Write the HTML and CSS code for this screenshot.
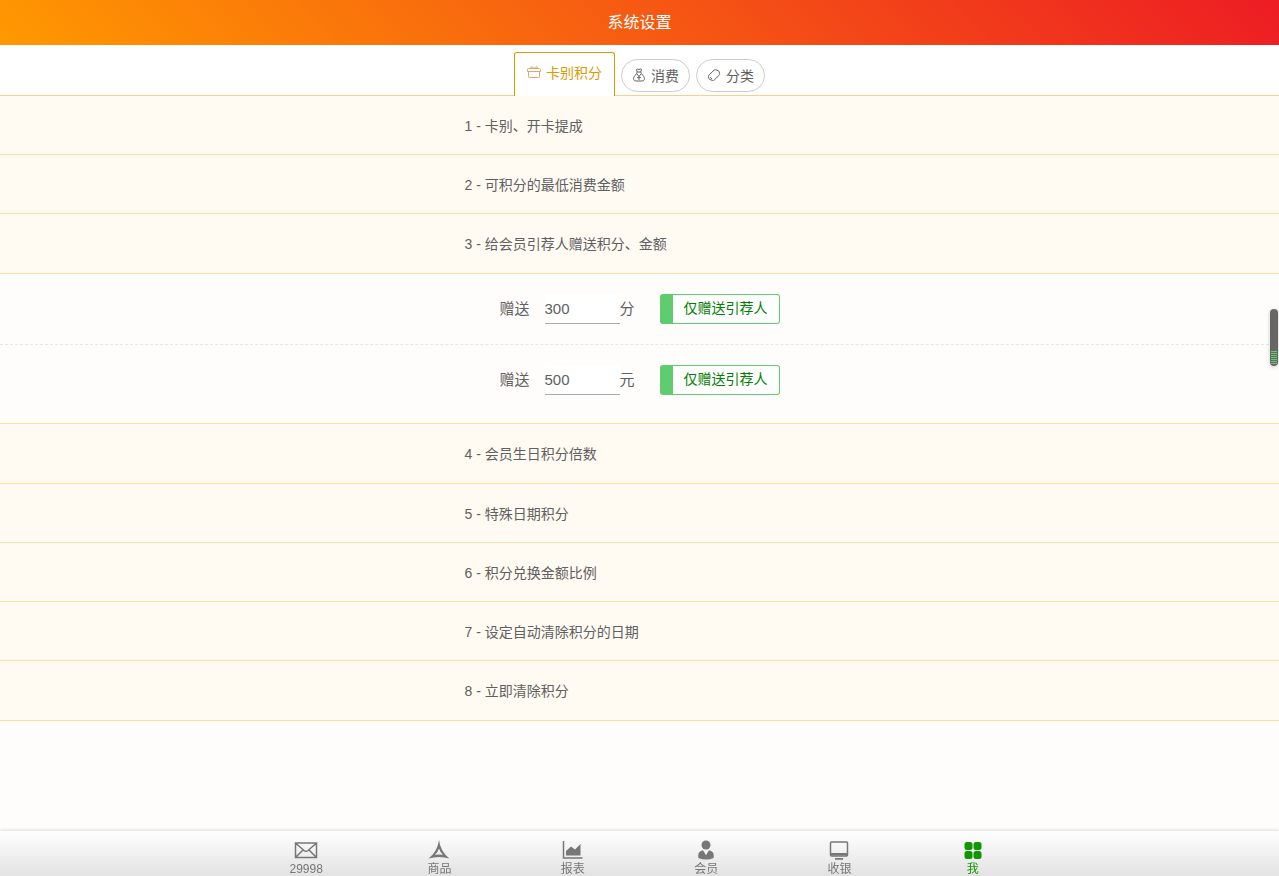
FILE: index.html
```html
<!DOCTYPE html>
<html lang="zh-CN">
<head>
<meta charset="utf-8">
<meta name="viewport" content="width=device-width, initial-scale=1">
<title>系统设置</title>
<link rel="stylesheet" href="styles.css">
</head>
<body>
<header class="header"><h1 class="title">系统设置</h1></header>
<div class="tabs">
  <button type="button" class="tab tab-active">
    <svg class="tab-icon" viewBox="0 0 14 14"><path d="M1.500 3.500h11q1 0 1 1v2H.5v-2q0-1 1-1zM1.500 6.500v5q0 1 1 1h9q1 0 1-1v-5M7 3.500 5.500 2q-2-1-2 1.500M7 3.500 8.500 2q2-1 2 1.500"/></svg>
    <span>卡别积分</span>
  </button>
  <button type="button" class="tab">
    <svg class="tab-icon" viewBox="0 0 14 14"><path d="M5.200 4 4.500 1.500q1.200-1 2.500 0 1.300-1 2.500 0L8.800 4zM5.200 4q-.2 1.500-2.200 3.500c-2.500 3-1.500 5.500 1 5.500h6c2.500 0 3.500-2.500 1-5.500Q9 5.500 8.800 4M5 6l2 2.500L9 6M7 8.500V12M5.200 9.500h3.600"/></svg>
    <span>消费</span>
  </button>
  <button type="button" class="tab">
    <svg class="tab-icon" viewBox="0 0 14 14"><path d="M2.200 6.800 7 2.200q.8-.7 1.800-.4l2.200.7q.8.300 1 1l.6 2.200q.2.900-.5 1.600L7.200 12q-.8.700-1.700.4L2.700 11.500q-.7-.3-.9-1l-.3-2q0-1 .7-1.700zM3.200 9.200l1.800 1.800"/></svg>
    <span>分类</span>
  </button>
</div>
<main class="content">
  <button type="button" class="section">1 - 卡别、开卡提成</button>
  <button type="button" class="section">2 - 可积分的最低消费金额</button>
  <button type="button" class="section section-edge">3 - 给会员引荐人赠送积分、金额</button>
  <div class="panel">
    <div class="setting">
      <label class="label" for="points">赠送</label>
      <input class="field" id="points" type="text" value="300">
      <span class="unit">分</span>
      <button type="button" class="choice">仅赠送引荐人</button>
    </div>
    <div class="setting">
      <label class="label" for="amount">赠送</label>
      <input class="field" id="amount" type="text" value="500">
      <span class="unit">元</span>
      <button type="button" class="choice">仅赠送引荐人</button>
    </div>
  </div>
  <button type="button" class="section section-edge">4 - 会员生日积分倍数</button>
  <button type="button" class="section">5 - 特殊日期积分</button>
  <button type="button" class="section">6 - 积分兑换金额比例</button>
  <button type="button" class="section">7 - 设定自动清除积分的日期</button>
  <button type="button" class="section section-edge">8 - 立即清除积分</button>
</main>
<div class="scroll-thumb"></div>
<nav class="nav">
  <div class="nav-list">
    <a class="nav-item" href="#messages">
      <svg class="nav-icon" viewBox="0 0 24 20"><path class="line medium" d="M1.500 3h21v14.500h-21zM2 3.500l8 7q2 1.500 4 0l8-7M2 17l7-7M22 17l-7-7"/></svg>
      <span>29998</span>
    </a>
    <a class="nav-item" href="#goods">
      <svg class="nav-icon" viewBox="0 0 24 20"><path class="solid" fill-rule="evenodd" d="M12 0c1 7 4 13.500 10.500 18.500Q12 15.500 1.500 18.500C8 13.500 11 7 12 0zM12 8.500Q11 12 8 14.800q4-.8 8 0Q13 12 12 8.500z"/></svg>
      <span>商品</span>
    </a>
    <a class="nav-item" href="#reports">
      <svg class="nav-icon" viewBox="0 0 24 20"><path class="line medium" d="M2.500 1v17h19"/><path class="solid" d="M5 15.500V11l5-4.500 4 3 5.500-5.500v11.500z"/></svg>
      <span>报表</span>
    </a>
    <a class="nav-item" href="#members">
      <svg class="nav-icon" viewBox="0 0 24 20"><circle class="solid" cx="12" cy="5" r="4.500"/><path class="solid" d="M4.300 18v-3q0-3.500 4.700-4.700l3 5 3-5q4.700 1.200 4.700 4.700v3q-7.700 3-15.400 0z"/></svg>
      <span>会员</span>
    </a>
    <a class="nav-item" href="#cashier">
      <svg class="nav-icon" viewBox="0 0 24 20"><rect class="line medium" x="3.500" y="2" width="17" height="14" rx="1"/><path class="solid" d="M4 13h16v2.500H4zM8 18h8v1.800H8z"/></svg>
      <span>收银</span>
    </a>
    <a class="nav-item nav-current" href="#me">
      <svg class="nav-icon" viewBox="0 0 24 20"><rect class="solid" x="3.500" y="2" width="8" height="8" rx="2.500"/><rect class="solid" x="12.500" y="2" width="8" height="8" rx="2.500"/><rect class="solid" x="3.500" y="11" width="8" height="8" rx="2.500"/><rect class="solid" x="12.500" y="11" width="8" height="8" rx="2.500"/></svg>
      <span>我</span>
    </a>
  </div>
</nav>
</body>
</html>
```
FILE: styles.css
```css
* { box-sizing: border-box; }
body {
  margin: 0;
  min-height: 100vh;
  display: flex;
  flex-direction: column;
  background: #fffdfc;
  color: #606060;
  font-family: "Liberation Sans", "Noto Sans CJK SC", sans-serif;
  font-size: 14px;
}
button, input { font: inherit; color: inherit; margin: 0; }
button { cursor: pointer; }

.header {
  height: 45px;
  display: flex;
  align-items: center;
  justify-content: center;
  background: linear-gradient(45deg, #ff9900, #ed1c24);
  color: #fff;
}
.title { margin: 0; font-size: 16px; line-height: 24px; font-weight: 400; }

.tabs {
  height: 51px;
  display: flex;
  justify-content: center;
  align-items: flex-end;
  gap: 6px;
  background: #fff;
  border-bottom: 1px solid #f9d08b;
}
.tab {
  height: 33px;
  margin-bottom: 3px;
  padding: 0 10px 2px;
  display: flex;
  align-items: center;
  gap: 5px;
  background: #fff;
  border: 1px solid #ccc;
  border-radius: 17px;
}
.tab-active {
  height: 44px;
  margin-bottom: -1px;
  padding: 0 12px 5px;
  color: #d89b00;
  border-color: #d89b00;
  border-bottom: 0;
  border-radius: 3px 3px 0 0;
}
.tab-icon { width: 14px; height: 14px; fill: none; stroke: currentColor; stroke-width: 1; }
.tab-active .tab-icon { stroke: #dca66c; }

.content { flex: 1; }
.section {
  display: block;
  width: 100%;
  height: 59px;
  padding: 0 0 0 calc(50% - 175px);
  text-align: left;
  background: #fffaf2;
  border: 0;
  border-bottom: 1px solid #ffe0a0;
}
.section-edge { height: 60px; padding-bottom: 1px; }

.panel { padding-bottom: 7px; border-bottom: 1px solid #ffe0a0; }
.setting {
  height: 71px;
  display: flex;
  justify-content: center;
  align-items: center;
  border-bottom: 1px dashed #e6e6e6;
  font-size: 15px;
}
.setting:last-child { border-color: transparent; }
.label { width: 45px; padding-bottom: 4px; }
.field {
  width: 75px;
  height: 30px;
  padding: 0;
  background: #fff;
  border: 0;
  border-bottom: 1px solid #aaa;
  border-radius: 0;
  font-size: 15px;
}
.unit { width: 40px; padding-bottom: 4px; }
.choice {
  width: 120px;
  height: 30px;
  padding: 0 0 4px;
  background: #fff;
  color: #008000;
  border: 1px solid #5fcd6e;
  border-left-width: 13px;
  border-radius: 3px;
  font-size: 14px;
}

.scroll-thumb {
  position: fixed;
  right: 1px;
  top: 309px;
  width: 8px;
  height: 57px;
  border-radius: 4px;
  background: repeating-linear-gradient(#5fcd6e 0 1px, #666 1px 2px) center 42px / 6px 13px no-repeat, #666;
  box-shadow: 0 1px 4px #ccc;
}

.nav {
  position: sticky;
  bottom: 0;
  height: 45px;
  background: linear-gradient(#fff, #e2e2e2);
  box-shadow: 0 -1px 3px #ddd;
}
.nav-list { max-width: 800px; margin: 0 auto; display: flex; }
.nav-item {
  flex: 1;
  padding-top: 9px;
  display: flex;
  flex-direction: column;
  align-items: center;
  color: #777;
  text-decoration: none;
  font-size: 12px;
  line-height: 18px;
}
.nav-current { color: #109600; }
.nav-icon { width: 24px; height: 20px; }
.line { fill: none; stroke: currentColor; stroke-width: 2; }
.medium { stroke-width: 1.5; }
.solid { fill: currentColor; }
```
